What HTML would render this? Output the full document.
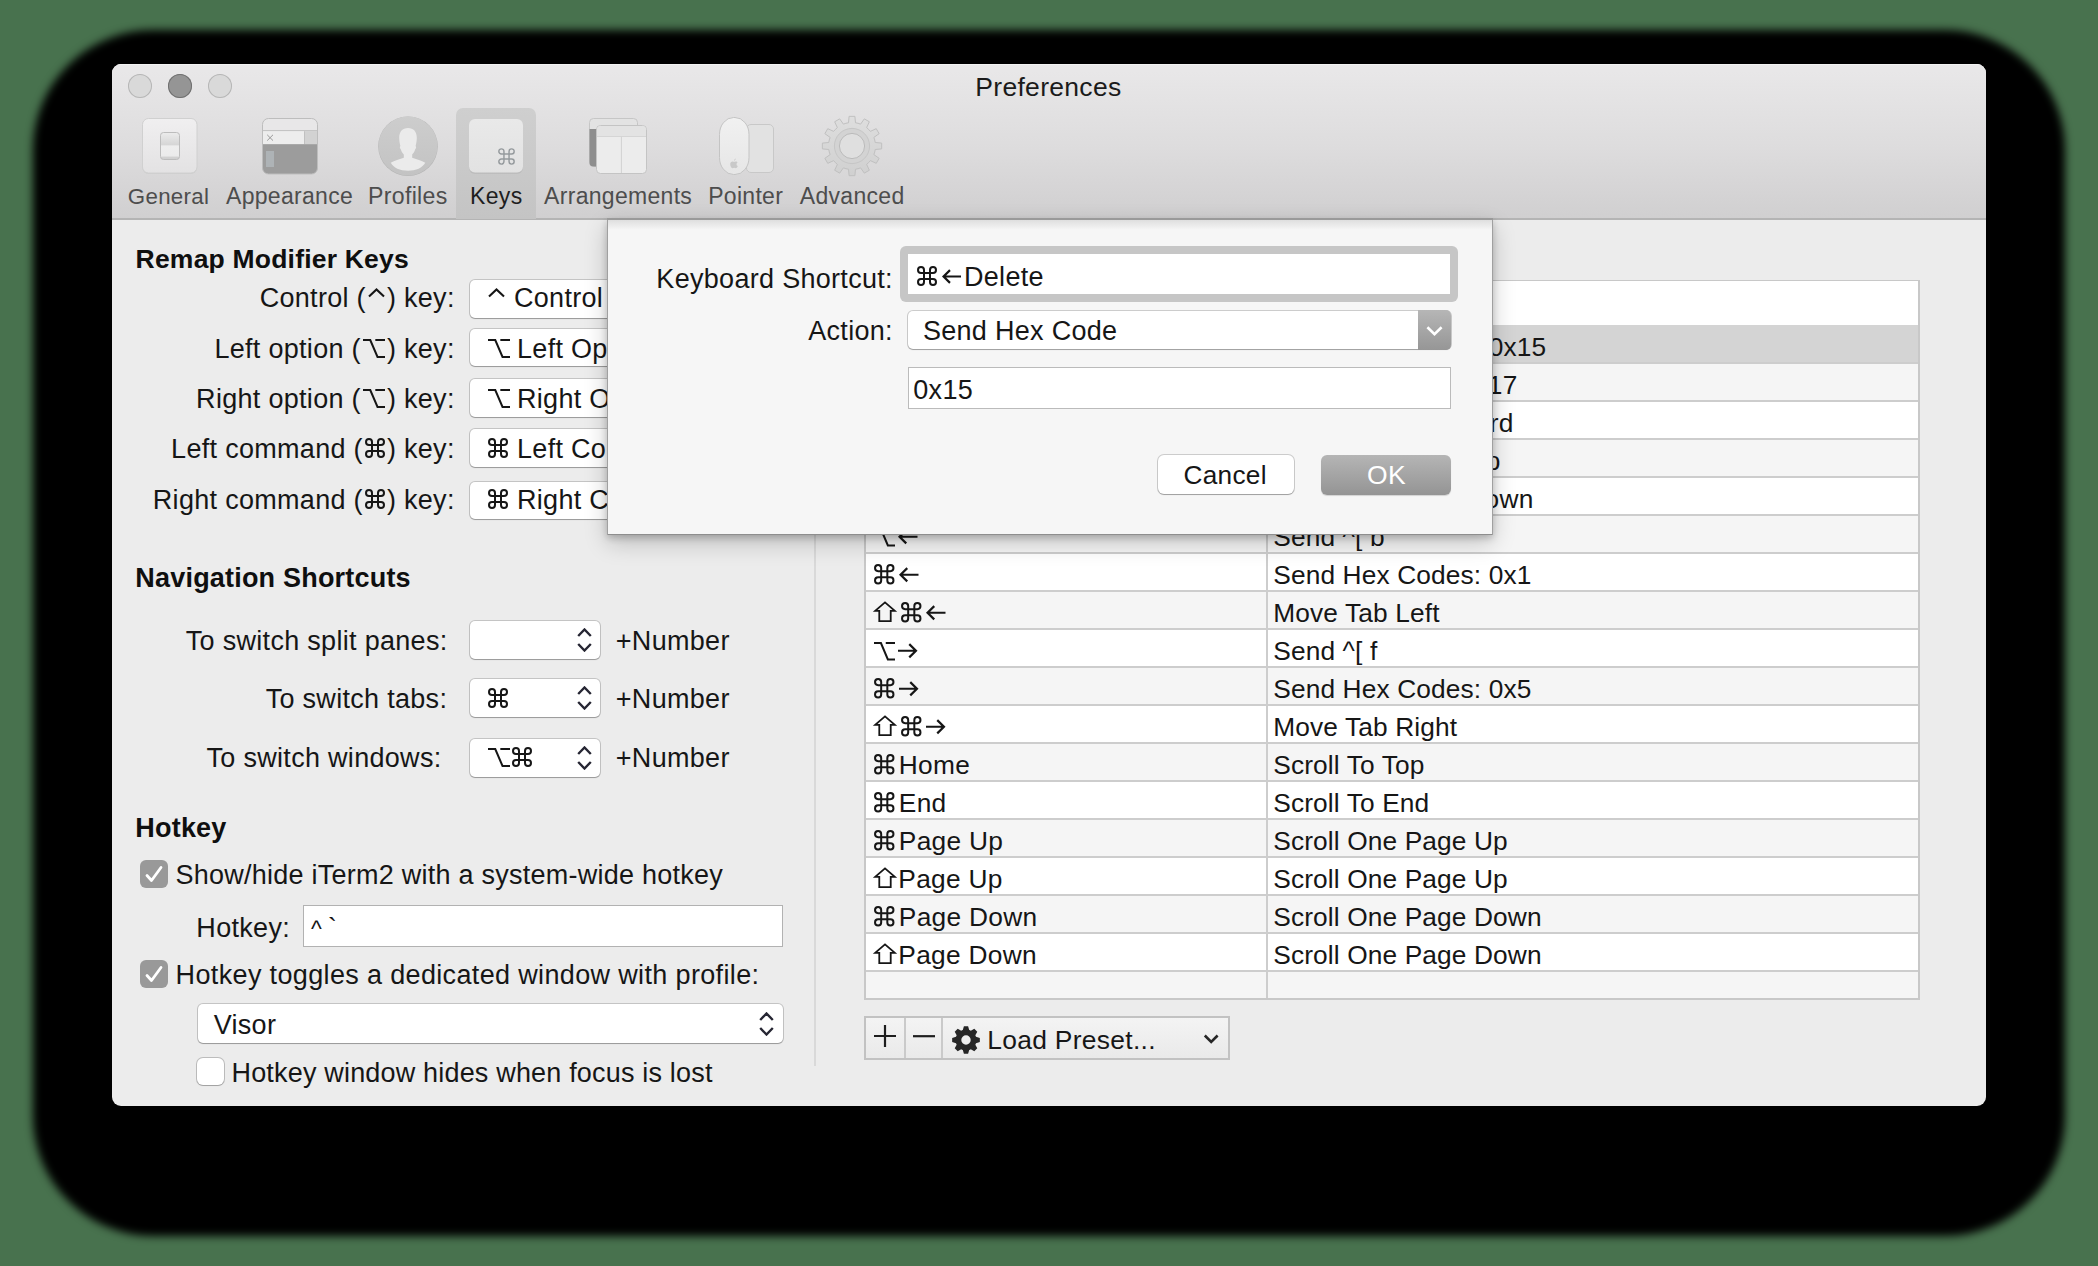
<!DOCTYPE html><html><head><meta charset="utf-8"><style>
html,body{margin:0;padding:0}
body{width:2098px;height:1266px;overflow:hidden;position:relative;background:#48724e;font-family:"Liberation Sans",sans-serif;color:#161616}
.a{position:absolute}
.t{position:absolute;white-space:nowrap;line-height:1;letter-spacing:0.3px}
.g{display:inline-block;vertical-align:0;overflow:visible}
#win{position:absolute;left:0;top:0;width:2098px;height:1266px;clip-path:inset(64px 112px 160px 112px round 9px)}
.popup{position:absolute;background:#fff;border-radius:5px;box-shadow:0 0 0 1px rgba(0,0,0,.17),0 1px 1px rgba(0,0,0,.22)}
</style></head><body>
<div class="a" style="left:33px;top:30px;width:2032px;height:1206px;background:#000;border-radius:120px;filter:blur(4.5px)"></div>
<div id="win">
<div class="a" style="left:112px;top:64px;width:1874px;height:1042px;background:#ececec"></div>
<div class="a" style="left:112px;top:64px;width:1874px;height:155px;background:linear-gradient(#e9e8e9,#dddcdd 55%,#d0cfd0)"></div>
<div class="a" style="left:112px;top:64px;width:1874px;height:1px;background:#f2f2f2"></div>
<div class="a" style="left:112px;top:218px;width:1874px;height:2px;background:#b4b4b4"></div>
<div class="a" style="left:128px;top:74px;width:24px;height:24px;background:#d9d9d9;box-shadow:inset 0 0 0 1px #b6b6b6;border-radius:50%"></div>
<div class="a" style="left:168px;top:74px;width:24px;height:24px;background:#959595;box-shadow:inset 0 0 0 1px #707070;border-radius:50%"></div>
<div class="a" style="left:208px;top:74px;width:24px;height:24px;background:#d9d9d9;box-shadow:inset 0 0 0 1px #b6b6b6;border-radius:50%"></div>
<div class="t" style="left:975.3px;top:74px;font-size:26.5px;color:#1b1b1b;">Preferences</div>
<div class="a" style="left:456px;top:108px;width:80px;height:111px;background:linear-gradient(#cfcfcf,#c4c4c4);border-radius:7px 7px 0 0"></div>
<div class="t" style="left:127.8px;top:186px;font-size:22.3px;color:#4d4d4d;">General</div>
<div class="t" style="left:226.0px;top:185px;font-size:23px;color:#4d4d4d;">Appearance</div>
<div class="t" style="left:368.1px;top:185px;font-size:23.1px;color:#4d4d4d;">Profiles</div>
<div class="t" style="left:470.1px;top:185px;font-size:23px;color:#1e1e1e;">Keys</div>
<div class="t" style="left:544.1px;top:185px;font-size:23px;color:#4d4d4d;">Arrangements</div>
<div class="t" style="left:708.2px;top:185px;font-size:23px;color:#4d4d4d;">Pointer</div>
<div class="t" style="left:799.8px;top:185px;font-size:23px;color:#4d4d4d;">Advanced</div>
<svg class="a" style="left:140px;top:116px" width="60" height="62" viewBox="140 116 60 62">
<defs><linearGradient id="gG" x1="0" y1="0" x2="0" y2="1"><stop offset="0" stop-color="#f0eff0"/><stop offset="1" stop-color="#e3e2e3"/></linearGradient>
<linearGradient id="gS" x1="0" y1="0" x2="0" y2="1"><stop offset="0" stop-color="#ececec"/><stop offset=".45" stop-color="#d6d6d6"/><stop offset=".5" stop-color="#eeeeee"/><stop offset=".88" stop-color="#ebebeb"/><stop offset=".9" stop-color="#d2d2d2"/><stop offset="1" stop-color="#cfcfcf"/></linearGradient></defs>
<rect x="142.5" y="119" width="54.5" height="55" rx="6" fill="#cfcfcf"/>
<rect x="142.5" y="118.5" width="54.5" height="54.5" rx="6" fill="url(#gG)" stroke="#d0d0d0" stroke-width="1"/>
<rect x="160.5" y="132.5" width="19" height="27" rx="3" fill="url(#gS)" stroke="#bcbcbc" stroke-width="1"/>
</svg>
<svg class="a" style="left:260px;top:116px" width="60" height="62" viewBox="260 116 60 62">
<defs><clipPath id="cA"><rect x="262.5" y="118.5" width="55" height="55.5" rx="6"/></clipPath></defs>
<g clip-path="url(#cA)">
<rect x="262" y="118" width="56" height="13" fill="#e8e7e8"/>
<rect x="262" y="130" width="56" height="1.2" fill="#c4c4c4"/>
<rect x="262" y="131.2" width="43" height="13" fill="#ededed"/>
<rect x="304.5" y="131.2" width="14" height="13" fill="#d2d2d2"/>
<rect x="304" y="131.2" width="1" height="13" fill="#c0c0c0"/>
<rect x="262" y="144.2" width="56" height="31" fill="#9c9c9c"/>
<rect x="266" y="151" width="8" height="16" fill="#aeb3b6"/>
</g>
<rect x="262.5" y="118.5" width="55" height="55.5" rx="6" fill="none" stroke="#bdbdbd" stroke-width="1"/>
<path d="M267.2 134.8L273 140.6M273 134.8L267.2 140.6" stroke="#9a9a9a" stroke-width="1"/>
</svg>
<svg class="a" style="left:376px;top:114px" width="64" height="64" viewBox="376 114 64 64">
<defs><clipPath id="cP"><circle cx="408" cy="146" r="29"/></clipPath>
<linearGradient id="gP" x1="0" y1="0" x2="0" y2="1"><stop offset="0" stop-color="#cdcdcd"/><stop offset="1" stop-color="#c3c3c3"/></linearGradient></defs>
<circle cx="408" cy="146.3" r="29.8" fill="#b5b5b5"/>
<circle cx="408" cy="146" r="29.5" fill="url(#gP)"/>
<g clip-path="url(#cP)">
<path d="M408 128c-5.5 0-8.8 3.8-8.8 9.6 0 3 .5 6 1.2 8.3-.9.6-.6 2.6.4 3.3.6 2.5 2 4.3 3 5.2v3.3c-5 1.8-10.5 3.5-13 5 2.5 5 9.3 8 17.2 8s14.7-3 17.2-8c-2.5-1.5-8-3.2-13-5v-3.3c1-.9 2.4-2.7 3-5.2 1-.7 1.3-2.7.4-3.3.7-2.3 1.2-5.3 1.2-8.3 0-5.8-3.3-9.6-8.8-9.6z" fill="#ebebeb"/>
</g>
</svg>
<svg class="a" style="left:466px;top:116px" width="60" height="62" viewBox="466 116 60 62">
<defs><linearGradient id="gK" x1="0" y1="0" x2="0" y2="1"><stop offset="0" stop-color="#e9e9e9"/><stop offset="1" stop-color="#e2e2e2"/></linearGradient></defs>
<rect x="469" y="120" width="54" height="54" rx="6" fill="#bdbdbd"/>
<rect x="469" y="119" width="54" height="53.5" rx="6" fill="url(#gK)"/>
<path transform="translate(498 148) scale(0.85)" d="M13 4V16A3 3 0 1 0 16 13H4A3 3 0 1 0 7 16V4A3 3 0 1 0 4 7H16A3 3 0 1 0 13 4Z" fill="none" stroke="#959a9d" stroke-width="1.7"/>
</svg>
<svg class="a" style="left:586px;top:115px" width="64" height="62" viewBox="586 115 64 62">
<rect x="589.5" y="118.5" width="48" height="48" rx="4" fill="#e3e3e3" stroke="#c6c6c6" stroke-width="1"/>
<path d="M589.5 129H597V166.5H593.5A4 4 0 0 1 589.5 162.5Z" fill="#8e8e8e"/>
<rect x="596.5" y="125.5" width="50" height="48" rx="4" fill="#ececec" stroke="#c4c4c4" stroke-width="1"/>
<path d="M597 136.4H646" stroke="#d3d3d3" stroke-width="1"/>
<path d="M600.5 126H642.5A3.5 3.5 0 0 1 646 129.5V136H597V129.5A3.5 3.5 0 0 1 600.5 126Z" fill="#e3e3e3"/>
<path d="M621.4 136.5V173" stroke="#d2d2d2" stroke-width="1"/>
</svg>
<svg class="a" style="left:716px;top:114px" width="62" height="64" viewBox="716 114 62 64">
<rect x="746.5" y="124.5" width="27" height="48" rx="4.5" fill="#e2e2e2" stroke="#c8c8c8" stroke-width="1"/>
<defs><linearGradient id="gM" x1="0" y1="0" x2="0" y2="1"><stop offset="0" stop-color="#f1f1f1"/><stop offset="1" stop-color="#e6e6e6"/></linearGradient></defs>
<rect x="719.5" y="117.5" width="29.5" height="57" rx="14" ry="17" fill="url(#gM)" stroke="#c4c4c4" stroke-width="1"/>
<path d="M734.5 159.5c.6-.8 1.3-1 1.3-1s0 .9-.6 1.6-1.2.7-1.2.7 0-.6.5-1.3zm-.4 2.3c.5 0 1-.4 1.7-.4 1 0 1.5.6 1.8 1-1.6.8-1.4 3 .2 3.6-.3.9-1.2 2.2-2 2.2-.6 0-.9-.4-1.6-.4s-1 .4-1.6.4c-1 0-2.4-2-2.4-4 0-1.8 1.2-2.7 2.2-2.7.7 0 1.2.4 1.7.3z" fill="#c9c9c9"/>
</svg>
<svg class="a" style="left:818px;top:112px" width="68" height="68" viewBox="818 112 68 68">
<defs><linearGradient id="gA" x1="0" y1="0" x2="0" y2="1"><stop offset="0" stop-color="#dedede"/><stop offset="1" stop-color="#d0d0d0"/></linearGradient></defs>
<path d="M845.92 123.30L848.51 122.76L849.10 116.34L854.90 116.34L855.49 122.76L858.08 123.30L860.60 124.13L864.32 118.87L869.34 121.76L866.64 127.62L868.62 129.38L870.38 131.36L876.24 128.66L879.13 133.68L873.87 137.40L874.70 139.92L875.24 142.51L881.66 143.10L881.66 148.90L875.24 149.49L874.70 152.08L873.87 154.60L879.13 158.32L876.24 163.34L870.38 160.64L868.62 162.62L866.64 164.38L869.34 170.24L864.32 173.13L860.60 167.87L858.08 168.70L855.49 169.24L854.90 175.66L849.10 175.66L848.51 169.24L845.92 168.70L843.40 167.87L839.68 173.13L834.66 170.24L837.36 164.38L835.38 162.62L833.62 160.64L827.76 163.34L824.87 158.32L830.13 154.60L829.30 152.08L828.76 149.49L822.34 148.90L822.34 143.10L828.76 142.51L829.30 139.92L830.13 137.40L824.87 133.68L827.76 128.66L833.62 131.36L835.38 129.38L837.36 127.62L834.66 121.76L839.68 118.87L843.40 124.13Z" fill="url(#gA)" stroke="#c0c0c0" stroke-width="1" stroke-linejoin="round" fill-rule="evenodd"/>
<circle cx="852" cy="146" r="17.6" fill="#d3d3d3" stroke="#c6c6c6" stroke-width="1"/>
<circle cx="852" cy="146" r="12.6" fill="#dfdfdf" stroke="#bbbbbb" stroke-width="1"/>
</svg>
<div class="t" style="left:135.6px;top:246px;font-size:26.5px;font-weight:bold;color:#0f0f0f;letter-spacing:0.2px">Remap Modifier Keys</div>
<div class="t" style="right:1643.3px;top:285px;font-size:27px;">Control (<svg class="g" width="17" height="9.5" viewBox="0 0 17 9.5" style="margin-left:2px;margin-right:2px;vertical-align:9.5px"><path d="M1 8.5L8.5 1.5L16 8.5" fill="none" stroke="currentColor" stroke-width="2.1"/></svg>) key:</div>
<div class="popup" style="left:470px;top:280px;width:300px;height:38px"></div>
<div class="t" style="left:488.0px;top:285px;font-size:27px;"><svg class="g" width="17" height="9.5" viewBox="0 0 17 9.5" style="margin-right:9px;vertical-align:9.5px"><path d="M1 8.5L8.5 1.5L16 8.5" fill="none" stroke="currentColor" stroke-width="2.1"/></svg>Control</div>
<div class="t" style="right:1643.3px;top:336px;font-size:27px;">Left option (<svg class="g" width="22" height="19" viewBox="0 0 22 19" style="margin-left:2px;margin-right:2px;"><path d="M0 1.0H7.26L14.52 18.0H22M12.32 1.0H22" fill="none" stroke="currentColor" stroke-width="2.0"/></svg>) key:</div>
<div class="popup" style="left:470px;top:329px;width:300px;height:37px"></div>
<div class="t" style="left:488.0px;top:336px;font-size:27px;"><svg class="g" width="22" height="19" viewBox="0 0 22 19" style="margin-left:0px;margin-right:7px;"><path d="M0 1.0H7.26L14.52 18.0H22M12.32 1.0H22" fill="none" stroke="currentColor" stroke-width="2.0"/></svg>Left Option</div>
<div class="t" style="right:1643.3px;top:386px;font-size:27px;">Right option (<svg class="g" width="22" height="19" viewBox="0 0 22 19" style="margin-left:2px;margin-right:2px;"><path d="M0 1.0H7.26L14.52 18.0H22M12.32 1.0H22" fill="none" stroke="currentColor" stroke-width="2.0"/></svg>) key:</div>
<div class="popup" style="left:470px;top:379px;width:300px;height:38px"></div>
<div class="t" style="left:488.0px;top:386px;font-size:27px;"><svg class="g" width="22" height="19" viewBox="0 0 22 19" style="margin-left:0px;margin-right:7px;"><path d="M0 1.0H7.26L14.52 18.0H22M12.32 1.0H22" fill="none" stroke="currentColor" stroke-width="2.0"/></svg>Right Option</div>
<div class="t" style="right:1643.3px;top:436px;font-size:27px;">Left command (<svg class="g" width="20" height="20" viewBox="0 0 20 20" style="margin-left:2px;margin-right:2px;"><path d="M13 4V16A3 3 0 1 0 16 13H4A3 3 0 1 0 7 16V4A3 3 0 1 0 4 7H16A3 3 0 1 0 13 4Z" fill="none" stroke="currentColor" stroke-width="2.00"/></svg>) key:</div>
<div class="popup" style="left:470px;top:429px;width:300px;height:38px"></div>
<div class="t" style="left:488.0px;top:436px;font-size:27px;"><svg class="g" width="20" height="20" viewBox="0 0 20 20" style="margin-left:0px;margin-right:9px;"><path d="M13 4V16A3 3 0 1 0 16 13H4A3 3 0 1 0 7 16V4A3 3 0 1 0 4 7H16A3 3 0 1 0 13 4Z" fill="none" stroke="currentColor" stroke-width="2.00"/></svg>Left Command</div>
<div class="t" style="right:1643.3px;top:487px;font-size:27px;">Right command (<svg class="g" width="20" height="20" viewBox="0 0 20 20" style="margin-left:2px;margin-right:2px;"><path d="M13 4V16A3 3 0 1 0 16 13H4A3 3 0 1 0 7 16V4A3 3 0 1 0 4 7H16A3 3 0 1 0 13 4Z" fill="none" stroke="currentColor" stroke-width="2.00"/></svg>) key:</div>
<div class="popup" style="left:470px;top:482px;width:300px;height:37px"></div>
<div class="t" style="left:488.0px;top:487px;font-size:27px;"><svg class="g" width="20" height="20" viewBox="0 0 20 20" style="margin-left:0px;margin-right:9px;"><path d="M13 4V16A3 3 0 1 0 16 13H4A3 3 0 1 0 7 16V4A3 3 0 1 0 4 7H16A3 3 0 1 0 13 4Z" fill="none" stroke="currentColor" stroke-width="2.00"/></svg>Right Command</div>
<div class="t" style="left:135.3px;top:565px;font-size:27px;font-weight:bold;color:#0f0f0f;letter-spacing:0.2px">Navigation Shortcuts</div>
<div class="t" style="right:1650.5px;top:628px;font-size:27px;">To switch split panes:</div>
<div class="popup" style="left:470px;top:621px;width:130px;height:38px"></div>
<div class="t" style="left:615.8px;top:628px;font-size:27px;">+Number</div>
<svg class="a" style="left:576px;top:628px" width="18" height="24" viewBox="0 0 18 24"><path d="M2.2 8L8.5 1.5L14.8 8M2.2 16L8.5 22.5L14.8 16" fill="none" stroke="#262633" stroke-width="2.4"/></svg>
<div class="t" style="right:1650.8px;top:686px;font-size:27px;">To switch tabs:</div>
<div class="popup" style="left:470px;top:679px;width:130px;height:38px"></div>
<div class="t" style="left:488.0px;top:686px;font-size:27px;"><svg class="g" width="20" height="20" viewBox="0 0 20 20" style="margin-left:0px;margin-right:0px;"><path d="M13 4V16A3 3 0 1 0 16 13H4A3 3 0 1 0 7 16V4A3 3 0 1 0 4 7H16A3 3 0 1 0 13 4Z" fill="none" stroke="currentColor" stroke-width="2.00"/></svg></div>
<div class="t" style="left:615.8px;top:686px;font-size:27px;">+Number</div>
<svg class="a" style="left:576px;top:686px" width="18" height="24" viewBox="0 0 18 24"><path d="M2.2 8L8.5 1.5L14.8 8M2.2 16L8.5 22.5L14.8 16" fill="none" stroke="#262633" stroke-width="2.4"/></svg>
<div class="t" style="right:1656.5px;top:745px;font-size:27px;">To switch windows:</div>
<div class="popup" style="left:470px;top:739px;width:130px;height:38px"></div>
<div class="t" style="left:488.0px;top:745px;font-size:27px;"><svg class="g" width="22" height="19" viewBox="0 0 22 19" style="margin-left:0px;margin-right:2px;"><path d="M0 1.0H7.26L14.52 18.0H22M12.32 1.0H22" fill="none" stroke="currentColor" stroke-width="2.0"/></svg><svg class="g" width="20" height="20" viewBox="0 0 20 20" style="margin-left:0px;margin-right:0px;"><path d="M13 4V16A3 3 0 1 0 16 13H4A3 3 0 1 0 7 16V4A3 3 0 1 0 4 7H16A3 3 0 1 0 13 4Z" fill="none" stroke="currentColor" stroke-width="2.00"/></svg></div>
<div class="t" style="left:615.8px;top:745px;font-size:27px;">+Number</div>
<svg class="a" style="left:576px;top:746px" width="18" height="24" viewBox="0 0 18 24"><path d="M2.2 8L8.5 1.5L14.8 8M2.2 16L8.5 22.5L14.8 16" fill="none" stroke="#262633" stroke-width="2.4"/></svg>
<div class="a" style="left:814px;top:230px;width:2px;height:836px;background:#d9d9d9"></div>
<div class="t" style="left:135.3px;top:815px;font-size:27px;font-weight:bold;color:#0f0f0f;letter-spacing:0.2px">Hotkey</div>
<div class="a" style="left:140px;top:860px;width:28px;height:28px;background:#999;border-radius:6px"></div>
<svg class="a" style="left:140px;top:860px" width="28" height="28" viewBox="0 0 28 28"><path d="M7 15.5L11.5 20.5L21 7.5" fill="none" stroke="#fff" stroke-width="2.8" stroke-linecap="round" stroke-linejoin="round"/></svg>
<div class="t" style="left:175.6px;top:862px;font-size:27px;letter-spacing:0.24px">Show/hide iTerm2 with a system-wide hotkey</div>
<div class="t" style="right:1808.0px;top:915px;font-size:27px;">Hotkey:</div>
<div class="a" style="left:303px;top:905px;width:480px;height:42px;background:#fff;box-shadow:inset 0 0 0 1px #b2b2b2"></div>
<div class="t" style="left:311.0px;top:915px;font-size:27px;"><span style="font-size:23px;position:relative;left:0px">^</span><span style="margin-left:6px">`</span></div>
<div class="a" style="left:140px;top:960px;width:28px;height:28px;background:#999;border-radius:6px"></div>
<svg class="a" style="left:140px;top:960px" width="28" height="28" viewBox="0 0 28 28"><path d="M7 15.5L11.5 20.5L21 7.5" fill="none" stroke="#fff" stroke-width="2.8" stroke-linecap="round" stroke-linejoin="round"/></svg>
<div class="t" style="left:175.6px;top:962px;font-size:27px;letter-spacing:0.35px">Hotkey toggles a dedicated window with profile:</div>
<div class="popup" style="left:198px;top:1004px;width:585px;height:39px"></div>
<div class="t" style="left:213.7px;top:1012px;font-size:27px;">Visor</div>
<svg class="a" style="left:758px;top:1012px" width="18" height="24" viewBox="0 0 18 24"><path d="M2.2 8L8.5 1.5L14.8 8M2.2 16L8.5 22.5L14.8 16" fill="none" stroke="#262633" stroke-width="2.4"/></svg>
<div class="a" style="left:197px;top:1058px;width:27px;height:27px;background:#fff;border-radius:6px;box-shadow:0 0 0 1px rgba(0,0,0,.2),0 1px 1px rgba(0,0,0,.15)"></div>
<div class="t" style="left:231.5px;top:1060px;font-size:27px;letter-spacing:0.18px">Hotkey window hides when focus is lost</div>
<div class="a" style="left:864px;top:280px;width:1056px;height:720px;background:#fff;border:2px solid #c8c8c8;border-top:1px solid #c8c8c8;box-sizing:border-box"></div>
<div class="a" style="left:866px;top:325px;width:1052px;height:37px;background:#d4d4d4"></div>
<div class="a" style="left:866px;top:362px;width:1052px;height:38px;background:#f5f5f5"></div>
<div class="a" style="left:866px;top:362px;width:1052px;height:2px;background:#cdcdcd"></div>
<div class="a" style="left:866px;top:400px;width:1052px;height:38px;background:#ffffff"></div>
<div class="a" style="left:866px;top:400px;width:1052px;height:2px;background:#cdcdcd"></div>
<div class="a" style="left:866px;top:438px;width:1052px;height:38px;background:#f5f5f5"></div>
<div class="a" style="left:866px;top:438px;width:1052px;height:2px;background:#cdcdcd"></div>
<div class="a" style="left:866px;top:476px;width:1052px;height:38px;background:#ffffff"></div>
<div class="a" style="left:866px;top:476px;width:1052px;height:2px;background:#cdcdcd"></div>
<div class="a" style="left:866px;top:514px;width:1052px;height:38px;background:#f5f5f5"></div>
<div class="a" style="left:866px;top:514px;width:1052px;height:2px;background:#cdcdcd"></div>
<div class="a" style="left:866px;top:552px;width:1052px;height:38px;background:#ffffff"></div>
<div class="a" style="left:866px;top:552px;width:1052px;height:2px;background:#cdcdcd"></div>
<div class="a" style="left:866px;top:590px;width:1052px;height:38px;background:#f5f5f5"></div>
<div class="a" style="left:866px;top:590px;width:1052px;height:2px;background:#cdcdcd"></div>
<div class="a" style="left:866px;top:628px;width:1052px;height:38px;background:#ffffff"></div>
<div class="a" style="left:866px;top:628px;width:1052px;height:2px;background:#cdcdcd"></div>
<div class="a" style="left:866px;top:666px;width:1052px;height:38px;background:#f5f5f5"></div>
<div class="a" style="left:866px;top:666px;width:1052px;height:2px;background:#cdcdcd"></div>
<div class="a" style="left:866px;top:704px;width:1052px;height:38px;background:#ffffff"></div>
<div class="a" style="left:866px;top:704px;width:1052px;height:2px;background:#cdcdcd"></div>
<div class="a" style="left:866px;top:742px;width:1052px;height:38px;background:#f5f5f5"></div>
<div class="a" style="left:866px;top:742px;width:1052px;height:2px;background:#cdcdcd"></div>
<div class="a" style="left:866px;top:780px;width:1052px;height:38px;background:#ffffff"></div>
<div class="a" style="left:866px;top:780px;width:1052px;height:2px;background:#cdcdcd"></div>
<div class="a" style="left:866px;top:818px;width:1052px;height:38px;background:#f5f5f5"></div>
<div class="a" style="left:866px;top:818px;width:1052px;height:2px;background:#cdcdcd"></div>
<div class="a" style="left:866px;top:856px;width:1052px;height:38px;background:#ffffff"></div>
<div class="a" style="left:866px;top:856px;width:1052px;height:2px;background:#cdcdcd"></div>
<div class="a" style="left:866px;top:894px;width:1052px;height:38px;background:#f5f5f5"></div>
<div class="a" style="left:866px;top:894px;width:1052px;height:2px;background:#cdcdcd"></div>
<div class="a" style="left:866px;top:932px;width:1052px;height:38px;background:#ffffff"></div>
<div class="a" style="left:866px;top:932px;width:1052px;height:2px;background:#cdcdcd"></div>
<div class="a" style="left:866px;top:970px;width:1052px;height:28px;background:#f5f5f5"></div>
<div class="a" style="left:866px;top:970px;width:1052px;height:2px;background:#cdcdcd"></div>
<div class="a" style="left:1266px;top:282px;width:2px;height:716px;background:#cdcdcd"></div>
<div class="t" style="left:1273.3px;top:334px;font-size:26.3px;letter-spacing:0.12px">Send Hex Codes: 0x15</div>
<div class="t" style="left:874.3px;top:524px;font-size:26.3px;"><svg class="g" width="21" height="18.5" viewBox="0 0 21 18.5" style="margin-left:0px;margin-right:0px;"><path d="M0 1.0H6.93L13.86 17.5H21M11.76 1.0H21" fill="none" stroke="currentColor" stroke-width="2.0"/></svg><svg class="g" width="19.5" height="15.5" viewBox="0 0 19.5 15.5" style="margin-left:3px;margin-right:0px;vertical-align:2px"><path d="M19.5 7.75H1.54M8.25 1.10L1.54 7.75L8.25 14.40" fill="none" stroke="currentColor" stroke-width="2.2" stroke-linecap="butt"/></svg></div>
<div class="t" style="left:1273.3px;top:524px;font-size:26.3px;letter-spacing:0.12px">Send ^[ b</div>
<div class="t" style="left:874.3px;top:562px;font-size:26.3px;"><svg class="g" width="20.5" height="20.5" viewBox="0 0 20 20" style="margin-left:0px;margin-right:0px;"><path d="M13 4V16A3 3 0 1 0 16 13H4A3 3 0 1 0 7 16V4A3 3 0 1 0 4 7H16A3 3 0 1 0 13 4Z" fill="none" stroke="currentColor" stroke-width="1.95"/></svg><svg class="g" width="19.5" height="15.5" viewBox="0 0 19.5 15.5" style="margin-left:4.5px;margin-right:0px;vertical-align:2px"><path d="M19.5 7.75H1.54M8.25 1.10L1.54 7.75L8.25 14.40" fill="none" stroke="currentColor" stroke-width="2.2" stroke-linecap="butt"/></svg></div>
<div class="t" style="left:1273.3px;top:562px;font-size:26.3px;letter-spacing:0.12px">Send Hex Codes: 0x1</div>
<div class="t" style="left:874.3px;top:600px;font-size:26.3px;"><svg class="g" width="22" height="21" viewBox="0 0 22 21" style="margin-left:0px;margin-right:0px"><path d="M11.00 1.40L20.80 9.87H16.72V20.10H5.28V9.87H1.20Z" fill="none" stroke="currentColor" stroke-width="1.8" stroke-linejoin="miter"/></svg><svg class="g" width="20.5" height="20.5" viewBox="0 0 20 20" style="margin-left:5px;margin-right:0px;"><path d="M13 4V16A3 3 0 1 0 16 13H4A3 3 0 1 0 7 16V4A3 3 0 1 0 4 7H16A3 3 0 1 0 13 4Z" fill="none" stroke="currentColor" stroke-width="1.95"/></svg><svg class="g" width="19.5" height="15.5" viewBox="0 0 19.5 15.5" style="margin-left:4.5px;margin-right:0px;vertical-align:2px"><path d="M19.5 7.75H1.54M8.25 1.10L1.54 7.75L8.25 14.40" fill="none" stroke="currentColor" stroke-width="2.2" stroke-linecap="butt"/></svg></div>
<div class="t" style="left:1273.3px;top:600px;font-size:26.3px;letter-spacing:0.12px">Move Tab Left</div>
<div class="t" style="left:874.3px;top:638px;font-size:26.3px;"><svg class="g" width="21" height="18.5" viewBox="0 0 21 18.5" style="margin-left:0px;margin-right:0px;"><path d="M0 1.0H6.93L13.86 17.5H21M11.76 1.0H21" fill="none" stroke="currentColor" stroke-width="2.0"/></svg><svg class="g" width="19.5" height="15.5" viewBox="0 0 19.5 15.5" style="margin-left:3px;margin-right:0px;vertical-align:2px"><path d="M0 7.75H17.96M11.25 1.10L17.96 7.75L11.25 14.40" fill="none" stroke="currentColor" stroke-width="2.2" stroke-linecap="butt"/></svg></div>
<div class="t" style="left:1273.3px;top:638px;font-size:26.3px;letter-spacing:0.12px">Send ^[ f</div>
<div class="t" style="left:874.3px;top:676px;font-size:26.3px;"><svg class="g" width="20.5" height="20.5" viewBox="0 0 20 20" style="margin-left:0px;margin-right:0px;"><path d="M13 4V16A3 3 0 1 0 16 13H4A3 3 0 1 0 7 16V4A3 3 0 1 0 4 7H16A3 3 0 1 0 13 4Z" fill="none" stroke="currentColor" stroke-width="1.95"/></svg><svg class="g" width="19.5" height="15.5" viewBox="0 0 19.5 15.5" style="margin-left:4.5px;margin-right:0px;vertical-align:2px"><path d="M0 7.75H17.96M11.25 1.10L17.96 7.75L11.25 14.40" fill="none" stroke="currentColor" stroke-width="2.2" stroke-linecap="butt"/></svg></div>
<div class="t" style="left:1273.3px;top:676px;font-size:26.3px;letter-spacing:0.12px">Send Hex Codes: 0x5</div>
<div class="t" style="left:874.3px;top:714px;font-size:26.3px;"><svg class="g" width="22" height="21" viewBox="0 0 22 21" style="margin-left:0px;margin-right:0px"><path d="M11.00 1.40L20.80 9.87H16.72V20.10H5.28V9.87H1.20Z" fill="none" stroke="currentColor" stroke-width="1.8" stroke-linejoin="miter"/></svg><svg class="g" width="20.5" height="20.5" viewBox="0 0 20 20" style="margin-left:5px;margin-right:0px;"><path d="M13 4V16A3 3 0 1 0 16 13H4A3 3 0 1 0 7 16V4A3 3 0 1 0 4 7H16A3 3 0 1 0 13 4Z" fill="none" stroke="currentColor" stroke-width="1.95"/></svg><svg class="g" width="19.5" height="15.5" viewBox="0 0 19.5 15.5" style="margin-left:4.5px;margin-right:0px;vertical-align:2px"><path d="M0 7.75H17.96M11.25 1.10L17.96 7.75L11.25 14.40" fill="none" stroke="currentColor" stroke-width="2.2" stroke-linecap="butt"/></svg></div>
<div class="t" style="left:1273.3px;top:714px;font-size:26.3px;letter-spacing:0.12px">Move Tab Right</div>
<div class="t" style="left:874.3px;top:752px;font-size:26.3px;"><svg class="g" width="20.5" height="20.5" viewBox="0 0 20 20" style="margin-left:0px;margin-right:4px;"><path d="M13 4V16A3 3 0 1 0 16 13H4A3 3 0 1 0 7 16V4A3 3 0 1 0 4 7H16A3 3 0 1 0 13 4Z" fill="none" stroke="currentColor" stroke-width="1.95"/></svg>Home</div>
<div class="t" style="left:1273.3px;top:752px;font-size:26.3px;letter-spacing:0.12px">Scroll To Top</div>
<div class="t" style="left:874.3px;top:790px;font-size:26.3px;"><svg class="g" width="20.5" height="20.5" viewBox="0 0 20 20" style="margin-left:0px;margin-right:4px;"><path d="M13 4V16A3 3 0 1 0 16 13H4A3 3 0 1 0 7 16V4A3 3 0 1 0 4 7H16A3 3 0 1 0 13 4Z" fill="none" stroke="currentColor" stroke-width="1.95"/></svg>End</div>
<div class="t" style="left:1273.3px;top:790px;font-size:26.3px;letter-spacing:0.12px">Scroll To End</div>
<div class="t" style="left:874.3px;top:828px;font-size:26.3px;"><svg class="g" width="20.5" height="20.5" viewBox="0 0 20 20" style="margin-left:0px;margin-right:4px;"><path d="M13 4V16A3 3 0 1 0 16 13H4A3 3 0 1 0 7 16V4A3 3 0 1 0 4 7H16A3 3 0 1 0 13 4Z" fill="none" stroke="currentColor" stroke-width="1.95"/></svg>Page Up</div>
<div class="t" style="left:1273.3px;top:828px;font-size:26.3px;letter-spacing:0.12px">Scroll One Page Up</div>
<div class="t" style="left:874.3px;top:866px;font-size:26.3px;"><svg class="g" width="22" height="21" viewBox="0 0 22 21" style="margin-left:0px;margin-right:2px"><path d="M11.00 1.40L20.80 9.87H16.72V20.10H5.28V9.87H1.20Z" fill="none" stroke="currentColor" stroke-width="1.8" stroke-linejoin="miter"/></svg>Page Up</div>
<div class="t" style="left:1273.3px;top:866px;font-size:26.3px;letter-spacing:0.12px">Scroll One Page Up</div>
<div class="t" style="left:874.3px;top:904px;font-size:26.3px;"><svg class="g" width="20.5" height="20.5" viewBox="0 0 20 20" style="margin-left:0px;margin-right:4px;"><path d="M13 4V16A3 3 0 1 0 16 13H4A3 3 0 1 0 7 16V4A3 3 0 1 0 4 7H16A3 3 0 1 0 13 4Z" fill="none" stroke="currentColor" stroke-width="1.95"/></svg>Page Down</div>
<div class="t" style="left:1273.3px;top:904px;font-size:26.3px;letter-spacing:0.12px">Scroll One Page Down</div>
<div class="t" style="left:874.3px;top:942px;font-size:26.3px;"><svg class="g" width="22" height="21" viewBox="0 0 22 21" style="margin-left:0px;margin-right:2px"><path d="M11.00 1.40L20.80 9.87H16.72V20.10H5.28V9.87H1.20Z" fill="none" stroke="currentColor" stroke-width="1.8" stroke-linejoin="miter"/></svg>Page Down</div>
<div class="t" style="left:1273.3px;top:942px;font-size:26.3px;letter-spacing:0.12px">Scroll One Page Down</div>
<div class="t" style="right:580.3px;top:372px;font-size:26.3px;">Send Hex Code 17</div>
<div class="t" style="right:584.3px;top:410px;font-size:26.3px;">Delete Word Forward</div>
<div class="t" style="right:597.3px;top:448px;font-size:26.3px;">Scroll One Line Up</div>
<div class="t" style="right:564.3px;top:486px;font-size:26.3px;">Scroll One Line Down</div>
<div class="a" style="left:864px;top:1016px;width:366px;height:44px;background:linear-gradient(#f4f4f4,#e9e9e9);box-shadow:inset 0 0 0 2px #c2c2c2"></div>
<div class="a" style="left:904px;top:1018px;width:2px;height:40px;background:#cacaca"></div>
<div class="a" style="left:941px;top:1018px;width:2px;height:40px;background:#cacaca"></div>
<svg class="a" style="left:870px;top:1020px" width="30" height="32" viewBox="870 1020 30 32"><path d="M885 1025V1047M874 1036H896" stroke="#1e1e1e" stroke-width="2.2"/></svg>
<svg class="a" style="left:908px;top:1030px" width="30" height="12" viewBox="908 1030 30 12"><path d="M913 1036.2H935" stroke="#1e1e1e" stroke-width="2.2"/></svg>
<svg class="a" style="left:948px;top:1022px" width="36" height="36" viewBox="948 1022 36 36"><path d="M961.98 1030.30L962.80 1030.00L963.91 1026.16L968.09 1026.16L969.20 1030.00L970.02 1030.30L970.81 1030.67L974.31 1028.73L977.27 1031.69L975.33 1035.19L975.70 1035.98L976.00 1036.80L979.84 1037.91L979.84 1042.09L976.00 1043.20L975.70 1044.02L975.33 1044.81L977.27 1048.31L974.31 1051.27L970.81 1049.33L970.02 1049.70L969.20 1050.00L968.09 1053.84L963.91 1053.84L962.80 1050.00L961.98 1049.70L961.19 1049.33L957.69 1051.27L954.73 1048.31L956.67 1044.81L956.30 1044.02L956.00 1043.20L952.16 1042.09L952.16 1037.91L956.00 1036.80L956.30 1035.98L956.67 1035.19L954.73 1031.69L957.69 1028.73L961.19 1030.67ZM966 1035.3A4.7 4.7 0 1 0 966 1044.7A4.7 4.7 0 1 0 966 1035.3Z" fill="#262626" fill-rule="evenodd"/></svg>
<div class="t" style="left:987.3px;top:1027px;font-size:26.4px;">Load Preset...</div>
<svg class="a" style="left:1200px;top:1030px" width="22" height="18" viewBox="1200 1030 22 18"><path d="M1204.8 1035.5L1211.2 1042L1217.6 1035.5" fill="none" stroke="#262626" stroke-width="2.6"/></svg>
<div class="a" style="left:607px;top:219px;width:886px;height:316px;background:#f6f6f6;box-shadow:0 8px 22px rgba(0,0,0,.20),0 3px 7px rgba(0,0,0,.20),inset 1px 0 0 #a0a0a0,inset -1px 0 0 #a0a0a0,inset 0 -1px 0 #8e8e8e"></div>
<div class="a" style="left:608px;top:219px;width:884px;height:11px;background:linear-gradient(#dcdcdc,rgba(246,246,246,0))"></div>
<div class="a" style="left:607px;top:218px;width:886px;height:2px;background:#9a9a9a"></div>
<div class="t" style="right:1205.1px;top:266px;font-size:27px;">Keyboard Shortcut:</div>
<div class="a" style="left:900px;top:246px;width:558px;height:56px;background:#c6c6c6;border-radius:6px"></div>
<div class="a" style="left:908px;top:254px;width:542px;height:40px;background:#fff"></div>
<div class="t" style="left:917.0px;top:264px;font-size:27px;"><svg class="g" width="20" height="20" viewBox="0 0 20 20" style="margin-left:0px;margin-right:0px;"><path d="M13 4V16A3 3 0 1 0 16 13H4A3 3 0 1 0 7 16V4A3 3 0 1 0 4 7H16A3 3 0 1 0 13 4Z" fill="none" stroke="currentColor" stroke-width="2.00"/></svg><svg class="g" width="19" height="15" viewBox="0 0 19 15" style="margin-left:5px;margin-right:0px;vertical-align:2px"><path d="M19 7.5H1.54M8.00 1.10L1.54 7.5L8.00 13.90" fill="none" stroke="currentColor" stroke-width="2.2" stroke-linecap="butt"/></svg><span style="margin-left:3px">Delete</span></div>
<div class="t" style="right:1205.1px;top:318px;font-size:27px;">Action:</div>
<div class="popup" style="left:908px;top:311px;width:543px;height:38px;border-radius:5px"></div>
<div class="a" style="left:1418px;top:310px;width:33px;height:39.5px;background:linear-gradient(#b6b6b6,#969696);border-radius:0 5px 5px 0"></div>
<svg class="a" style="left:1420px;top:318px" width="30" height="24" viewBox="1420 318 30 24"><path d="M1427.4 327.3L1434.5 334.2L1441.6 327.3" fill="none" stroke="#fff" stroke-width="2.6"/></svg>
<div class="t" style="left:922.9px;top:318px;font-size:27px;">Send Hex Code</div>
<div class="a" style="left:908px;top:367px;width:543px;height:42px;background:#fff;box-shadow:inset 0 0 0 1px #bbbbbb"></div>
<div class="t" style="left:913.3px;top:377px;font-size:27px;">0x15</div>
<div class="popup" style="left:1158px;top:455px;width:136px;height:39px;border-radius:6px"></div>
<div class="t" style="left:1183.5px;top:462px;font-size:26.2px;">Cancel</div>
<div class="a" style="left:1321px;top:455px;width:130px;height:39.5px;background:linear-gradient(#b5b5b5,#949494);border-radius:6px;box-shadow:0 1px 1px rgba(0,0,0,.15)"></div>
<div class="t" style="left:1367.0px;top:462px;font-size:26.5px;color:#fff;">OK</div>
</div></body></html>
